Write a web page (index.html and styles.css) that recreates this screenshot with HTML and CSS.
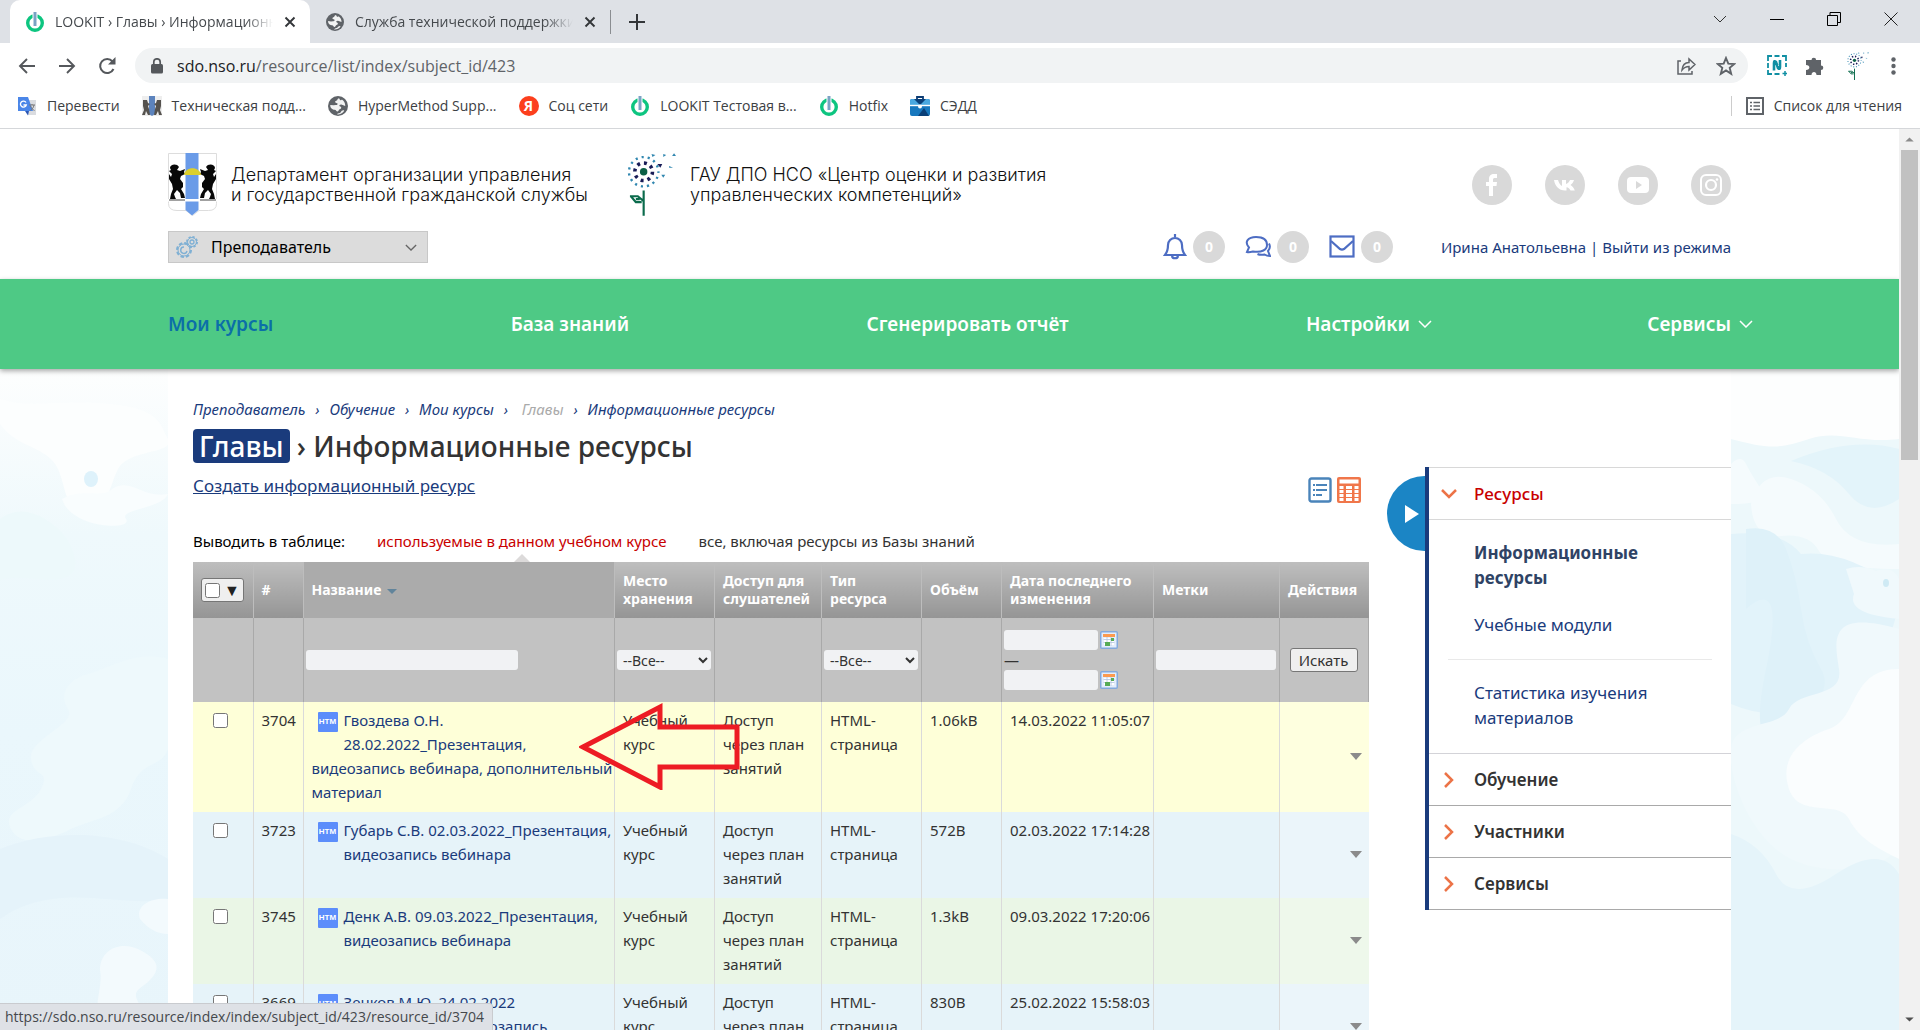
FILE: index.html
```html
<!DOCTYPE html>
<html lang="ru">
<head>
<meta charset="utf-8">
<title>LOOKIT › Главы › Информационные ресурсы</title>
<link rel="stylesheet" href="styles.css">
</head>
<body>
<svg class="defs" aria-hidden="true">
  <symbol id="power" viewBox="0 0 18 20"><circle cx="9" cy="11" r="7.3" fill="#fff" stroke="#0dc580" stroke-width="3.4"/><path d="M9 0v14" stroke="#fff" stroke-width="5"/><path d="M9 0v14" stroke="#7aa3c4" stroke-width="3"/></symbol>
  <symbol id="globe" viewBox="0 0 18 18"><circle cx="9" cy="9" r="9" fill="#5f6368"/><path d="M10 2c-2 .2-1 2-2.600 2.300C6 4.600 6 6 7.500 6.200c2 .3 1.200 2-.5 2L5 8.400 2 8c0 3 2 4.200 4 4.300 1.500 0 1.300 1.700 2.500 1.700 1 0 1-2 2.500-2.300 1.500-.4 1-2.200-.5-2.400-.8-.8.3-1.800 1.500-1.600L15.500 9c.3-2.500-1.500-5-3-5.800-.5.9-1.600 1-2.500-1.200zM8 16.500c1.500.3 5.500-.5 6.600-3.500-1.600-.4-2.600.6-3.100 1.600-.9 1.100-2.500.5-3.500 1.900z" fill="#fff" opacity=".92"/></symbol>
  <symbol id="x" viewBox="0 0 12 12"><path d="M1.500 1.500l9 9m0-9l-9 9" stroke="#333639" stroke-width="1.900"/></symbol>
  <symbol id="arms" viewBox="0 0 49 63">
    <path d="M.5.500h48v50q0 7-8 7h-9.500l-6.500 5-6.500-5H9q-8.500 0-8.500-7z" fill="#fff" stroke="#ddd"/>
    <path d="M17.500 0h13v57l-6.500 5.500-6.500-5.500z" fill="#6a9be8"/>
    <path d="M2 15c0-4 7-5 9-1l-2 3 3 1 5-2-1 3 1 2-4 2-1 3 3 4 0 4-2 2 3 5 1 4h-4l-1-5-3-3-3 4 1 3 1 2H2l1-5 2-5-1-5-3-5 0-5 2 3 1-3-3-3 2-1z" fill="#080808"/>
    <path d="M47 15c0-4-7-5-9-1l2 3-3 1-5-2 1 3-1 2 4 2 1 3-3 4 0 4 2 2-3 5-1 4h4l1-5 3-3 3 4-1 3-1 2h6l-1-5-2-5 1-5 3-5 0-5-2 3-1-3 3-3-2-1z" fill="#080808"/>
    <path d="M16 22c1-9 16-9 17 0z" fill="#dccf2c"/>
    <path d="M0 46h49v2.500H0z" fill="#fff"/><path d="M1 47h16m15 0h16" stroke="#444"/>
  </symbol>
  <symbol id="flower" viewBox="0 0 50 64">
    <circle cx="17" cy="19" r="3.800" fill="#0b5f46"/>
    <circle cx="17" cy="19" r="9" fill="none" stroke="#191c57" stroke-width="3.600" stroke-dasharray="3 4.070"/>
    <circle cx="17" cy="19" r="15" fill="none" stroke="#3187b0" stroke-width="2.400" stroke-dasharray="2.200 4.080" stroke-dashoffset="1"/>
    <path d="M31 11h5l-2 4z" fill="#191c57"/>
    <path d="M25 1l4 1-3 2zM37 1l3 1-3 2zM48 0l2 3h-4zM43 13l4 2h-4zM35 22h4l-2 3z" fill="#3187b0"/>
    <path d="M17 38v26M3 44h8l6 5M4 44l5 6h6M9 47h4" fill="none" stroke="#0b6b4c" stroke-width="2.200"/>
  </symbol>
  <symbol id="down" viewBox="0 0 14 8"><path d="M1 1l6 6 6-6" fill="none" stroke="currentColor" stroke-width="1.500"/></symbol>
  <symbol id="right" viewBox="0 0 16 16"><path d="M4 1l7 7-7 7" fill="none" stroke="#ec7347" stroke-width="2.500"/></symbol>
  <symbol id="cal" viewBox="0 0 18 18"><rect x=".75" y=".75" width="16.500" height="16.500" rx="1" fill="#e4eefc" stroke="#83a9dc" stroke-width="1.500"/><path d="M3 3h12v3H3z" fill="#fb9a50"/><path d="M4 7h10v7H4z" fill="#fff"/><path d="M3.500 8.500h11m-11 3h11M7 6v9m4-9v9" stroke="#b3c4df" stroke-width=".8"/><path d="M11 7h3v3h-3zM5 11h5v4H5z" fill="#58ab56"/></symbol>
</svg>

<header class="chrome">
  <div class="tabs">
    <div class="tab tab-on"><svg class="i18"><use href="#power"/></svg><span class="tab-title">LOOKIT › Главы › Информационные</span><button class="bare" aria-label="Закрыть"><svg class="i12"><use href="#x"/></svg></button></div>
    <div class="tab"><svg class="i18"><use href="#globe"/></svg><span class="tab-title">Служба технической поддержки</span><button class="bare" aria-label="Закрыть"><svg class="i12"><use href="#x"/></svg></button></div>
    <button class="bare newtab" aria-label="Новая вкладка"><svg class="i16" viewBox="0 0 16 16"><path d="M8 0v16M0 8h16" stroke="#333639" stroke-width="2"/></svg></button>
    <div class="wincontrols">
      <svg width="14" height="14" viewBox="0 0 14 14"><path d="M1 4l6 6 6-6" fill="none" stroke="#333"/></svg>
      <svg width="14" height="14" viewBox="0 0 14 14"><path d="M0 7.500h14" stroke="#000"/></svg>
      <svg width="14" height="14" viewBox="0 0 14 14"><path d="M.5 3.500h10v10H.5zM3 3.500V.5h10.500v10H11" fill="none" stroke="#000"/></svg>
      <svg width="14" height="14" viewBox="0 0 14 14"><path d="M.5.500l13 13m0-13l-13 13" stroke="#222"/></svg>
    </div>
  </div>
  <div class="toolbar">
    <div class="history">
      <button class="bare" aria-label="Назад"><svg class="i18" viewBox="0 0 18 18"><path d="M17 9H2m7-7L2 9l7 7" fill="none" stroke="#55585c" stroke-width="1.900"/></svg></button>
      <button class="bare" aria-label="Вперёд"><svg class="i18" viewBox="0 0 18 18"><path d="M1 9h15M9 2l7 7-7 7" fill="none" stroke="#55585c" stroke-width="1.900"/></svg></button>
      <button class="bare" aria-label="Обновить"><svg class="i18" viewBox="0 0 18 18"><path d="M15.500 12A7 7 0 1 1 14.500 4.500L16 6" fill="none" stroke="#55585c" stroke-width="2"/><path d="M17.500 0v7.500H10z" fill="#55585c"/></svg></button>
    </div>
    <div class="omnibox">
      <svg width="12" height="16" viewBox="0 0 12 16"><rect y="6" width="12" height="9.500" rx="1.500" fill="#55585c"/><path d="M2.800 7V4a3.200 3.200 0 0 1 6.400 0v3" fill="none" stroke="#55585c" stroke-width="1.700"/></svg>
      <span class="url"><b>sdo.nso.ru</b>/resource/list/index/subject_id/423</span>
      <svg class="i20" viewBox="0 0 20 20"><path d="M5 5H2v13h14v-3M6 14c.5-5 3.500-7.500 7-7.500V3l6 5.500-6 5.500v-3.500c-3 0-5 1-7 3.500z" fill="none" stroke="#5f6368" stroke-width="1.500"/></svg>
      <svg class="i20" viewBox="0 0 20 20"><path d="M10 2l2.300 5.600 6 .4-4.600 3.900 1.500 5.900L10 14.500l-5.200 3.300 1.500-5.900L1.700 8l6-.4z" fill="none" stroke="#5f6368" stroke-width="1.900"/></svg>
    </div>
    <svg width="20" height="21" viewBox="0 0 20 21"><path d="M1 6V1h4m2.500 0h5M15 1h4v5m0 2v4M1 8v5m0 2v4h4m2.500 0h5" fill="none" stroke="#108fa3" stroke-width="1.800"/><path d="M7 15.500V8q0-3 2-1l2 6q2 2 2-1V5" fill="none" stroke="#108fa3" stroke-width="2.600"/><path d="M18 16v5m-2.500-2.500h5" stroke="#108fa3" stroke-width="1.500"/></svg>
    <svg width="19" height="20" viewBox="0 0 19 20"><path d="M0 4h5.500a2.300 2.300 0 1 1 4.600 0H15v5.500a2.300 2.300 0 1 1 0 4.600V19h-4.500c0-4-5-4-5 0H0v-5c4.500 0 4.500-5 0-5z" fill="#5f6368"/></svg>
    <svg width="28" height="28"><use href="#flower"/></svg>
    <svg width="5" height="18" viewBox="0 0 5 18" fill="#5f6368"><circle cx="2.500" cy="2.500" r="2.200"/><circle cx="2.500" cy="9" r="2.200"/><circle cx="2.500" cy="15.500" r="2.200"/></svg>
  </div>
  <nav class="bookmarks">
    <a href="#"><svg class="i20" viewBox="0 0 20 20"><path d="M7 4h12v15H11z" fill="#dadce0"/><path d="M1 1h10l5 14H1z" fill="#4a86e8"/><path d="M12 15l-1 4.500L8 15z" fill="#2b57b5"/><path d="M9 6.500A3 3 0 1 0 9.300 9H6.500" fill="none" stroke="#fff" stroke-width="1.300"/><path d="M12 9h6m-3-1v1m2 0c-.5 3-2 4-3.500 5.500M13.500 10c.8 2 2 3.500 4 4.500" fill="none" stroke="#777"/></svg>Перевести</a>
    <a href="#"><svg class="i20" viewBox="0 0 20 20"><path d="M0 0h20v20H0z" fill="#eee"/><path d="M7 0h6v18l-3 2-3-2z" fill="#5c83bd"/><path d="M1 4h4l1 3 2 1-2 2 1 3 1 6H6l-2-4-1 4H0l2-5-1-4zM19 4h-4l-1 3-2 1 2 2-1 3-1 6h2l2-4 1 4h3l-2-5 1-4z" fill="#55524e"/></svg>Техническая подд...</a>
    <a href="#"><svg class="i20"><use href="#globe"/></svg>HyperMethod Supp...</a>
    <a href="#"><span class="ya">Я</span>Соц сети</a>
    <a href="#"><svg class="i20"><use href="#power"/></svg>LOOKIT Тестовая в...</a>
    <a href="#"><svg class="i20"><use href="#power"/></svg>Hotfix</a>
    <a href="#"><svg class="i20" viewBox="0 0 20 20"><path d="M7 4V1h6v3" fill="none" stroke="#0b3c74" stroke-width="1.800"/><rect y="3" width="20" height="17" rx="2" fill="#1878be"/><path d="M0 9V5q0-2 2-2h16q2 0 2 2v4z" fill="#4aa8e0"/><path d="M4 3h12l-6 6zM14 12l5 8H8z" fill="#0a3f78"/><path d="M0 9.500h20" stroke="#fff" stroke-width="1.400"/><circle cx="10" cy="10.500" r="2" fill="#fff"/></svg>СЭДД</a>
    <a href="#" class="reading"><svg class="i18" viewBox="0 0 18 18"><rect x="1" y="1" width="16" height="16" fill="none" stroke="#5f6368" stroke-width="2"/><path d="M4 5.500h2m1.500 0H14M4 9h2m1.500 0H14m-10 3.500h2m1.500 0H14" stroke="#5f6368" stroke-width="1.600"/></svg>Список для чтения</a>
  </nav>
</header>

<div class="viewport">
<div class="page">
  <header class="site-head">
    <div class="wrap head-top">
      <a href="#" class="logo"><svg width="49" height="63"><use href="#arms"/></svg><span>Департамент организации управления<br>и государственной гражданской службы</span></a>
      <a href="#" class="logo"><svg width="49" height="63"><use href="#flower"/></svg><span>ГАУ ДПО НСО «Центр оценки и развития<br>управленческих компетенций»</span></a>
      <div class="social">
        <a href="#" aria-label="Facebook"><svg viewBox="0 0 40 40"><path d="M17 31V21h-3v-4h3v-3c0-3.500 2-5 5-5h3v4h-2c-1.500 0-2 .5-2 2v2h4l-.5 4H21v10z" fill="#fff"/></svg></a>
        <a href="#" aria-label="VK"><svg viewBox="0 0 40 40"><path d="M9 15h4c1 3 2.500 5.500 4 6v-6h4v4c1.500-.3 3-2 4-4h4c-.6 2-2 4-3.500 5 1.800 1 3.500 3 4.300 5.500H25.500c-.8-1.700-2.300-3-4-3.200v3.200h-1.500C14 25.500 10 21 9 15z" fill="#fff"/></svg></a>
        <a href="#" aria-label="YouTube"><svg viewBox="0 0 40 40"><rect x="9" y="12" width="22" height="16" rx="4" fill="#fff"/><path d="M18 16l6 4-6 4z" fill="#d9d9d9"/></svg></a>
        <a href="#" aria-label="Instagram"><svg viewBox="0 0 40 40"><rect x="10" y="10" width="20" height="20" rx="5" fill="none" stroke="#fff" stroke-width="2"/><circle cx="20" cy="20" r="5" fill="none" stroke="#fff" stroke-width="2.200"/><circle cx="26" cy="14.500" r="1.300" fill="#fff"/></svg></a>
      </div>
    </div>
    <div class="wrap head-bottom">
      <label class="role"><svg class="gear" viewBox="0 0 24 24"><g fill="none" stroke="#7fb0d4"><circle cx="9" cy="15" r="7" stroke-width="2" stroke-dasharray="3.500 2"/><circle cx="9" cy="15" r="6" stroke-width="1"/><path d="M12 16a3.200 3.200 0 1 1-3-4" stroke-width="1.400"/><circle cx="17" cy="7" r="5" stroke-width="2" stroke-dasharray="2.200 1.700" fill="#dcdcdc"/><circle cx="17" cy="7" r="4.500"/><circle cx="17" cy="7" r="2" stroke-width="1.300"/></g></svg>
        <select aria-label="Роль"><option>Преподаватель</option></select><svg class="role-arrow"><use href="#down"/></svg></label>
      <div class="counters">
        <a href="#"><svg width="24" height="26" viewBox="0 0 24 26" fill="none" stroke="#4d6dc3" stroke-width="2.200"><path d="M12 0v3M2 21c2-2.500 3-5 3-10a7 7 0 0 1 14 0c0 5 1 7.500 3 10zM9 22c.5 3 5.500 3 6 0"/></svg><span>0</span></a>
        <a href="#"><svg width="26" height="26" viewBox="0 0 26 26" fill="none" stroke="#4d6dc3" stroke-width="2"><path d="M2 18l2-4.500C-1 8 3 3 11 3s11 3.500 11 8-5 8-14 6.500C6 18 4 18.500 2 18zM24 9.500c1.500 3 .5 6-1 7.500l2 5c-3 0-4-.5-5.500-1.500-3 .5-5 .5-7-.5"/></svg><span>0</span></a>
        <a href="#"><svg width="26" height="26" viewBox="0 0 26 26" fill="none" stroke="#4d6dc3" stroke-width="2.200"><rect x="1.500" y="2.500" width="23" height="20"/><path d="M2 7l9 8q2 1.200 4 0l9-8"/></svg><span>0</span></a>
      </div>
      <div class="user"><a href="#">Ирина Анатольевна</a> | <a href="#">Выйти из режима</a></div>
    </div>
  </header>

  <nav class="mainnav"><div class="wrap">
    <a href="#" class="on">Мои курсы</a><a href="#">База знаний</a><a href="#">Сгенерировать отчёт</a>
    <a href="#">Настройки<svg><use href="#down"/></svg></a><a href="#">Сервисы<svg><use href="#down"/></svg></a>
  </div></nav>

  <div class="body-grid">
    <svg class="sky" viewBox="0 0 168 661" preserveAspectRatio="none">
      <defs><linearGradient id="fade" x2="0" y2="1"><stop offset="0" stop-color="#fdfefe"/><stop offset=".25" stop-color="#eff9fc"/><stop offset=".55" stop-color="#eaf7fc"/><stop offset="1" stop-color="#e8f5fb"/></linearGradient></defs>
      <path d="M0 0h168v661H0z" fill="url(#fade)"/>
      <path d="M0 30c30 10 60 0 110 5s50 20 58 35-40 10-50 30-5 30-30 36-20-13-30-36-40-20-58-45z" fill="#fcfefe"/>
      <path d="M62 130c20-12 40 0 50-10 20-12 30 10 56 5-6 15-50 15-42 25 8 12-55 10-64-20z" fill="#f9fdfe"/>
      <path d="M0 150q20-15 45 0t30 40-40 20-35 10z" fill="#edf9fb"/>
      <path d="M168 290c-30-10-60 10-80 15s-30 20-20 35-40 30-37 50 20 10 10 30-40 20-30 40 40 10 60 0 50-10 60-40 30-20 37-40z" fill="#eef9fc"/>
      <path d="M0 480c50-20 120-20 168 10v40c-50 10-110-20-168 20z" fill="#e5f3fa"/>
      <path d="M104 661c-15-20 0-40-4-60 0-20 20-30 40-20s20 20 10 30-20 10-10 25-6 20-10 25zM140 550c-5-12 10-22 28-20v35c-10 0-20-5-28-15z" fill="#f3fafd"/>
      <ellipse cx="91" cy="110" rx="7" ry="8" fill="#def2fb"/>
    </svg>

    <main class="content">
      <section class="resources">
        <nav class="crumbs"><a href="#">Преподаватель</a><i>›</i><a href="#">Обучение</a><i>›</i><a href="#">Мои курсы</a><i>›</i><a href="#" class="dim">Главы</a><i>›</i><a href="#">Информационные ресурсы</a></nav>
        <h1><a href="#">Главы</a> › Информационные ресурсы</h1>
        <div class="create"><a href="#">Создать информационный ресурс</a>
          <span class="views">
            <svg width="24" height="26" viewBox="0 0 24 26"><rect x="1.500" y="1.500" width="21" height="23" rx="2" fill="#fff" stroke="#4a84ba" stroke-width="2.400"/><path d="M5 8h2m1 0h11M5 13h2m1 0h11M5 18h2m1 0h6" stroke="#4a84ba" stroke-width="1.800"/></svg>
            <svg width="24" height="26" viewBox="0 0 24 26"><rect width="24" height="26" rx="2" fill="#f0764a"/><path d="M2.500 2.500h19v4h-19zM2.500 9h4v3h-4zm0 4h4v3h-4zm0 4h4v3h-4zm0 4h4v3h-4zM9 9h6v3H9zm0 4h6v3H9zm0 4h6v3H9zm0 4h6v3H9zM17.500 9h4v3h-4zm0 4h4v3h-4zm0 4h4v3h-4zm0 4h4v3h-4z" fill="#fff"/></svg>
          </span>
        </div>
        <div class="scope"><span>Выводить в таблице:</span><a href="#" class="on">используемые в данном учебном курсе</a><a href="#">все, включая ресурсы из Базы знаний</a></div>

        <table>
          <colgroup><col class="c-check"><col class="c-id"><col><col class="c-place"><col class="c-access"><col class="c-type"><col class="c-size"><col class="c-date"><col class="c-tags"><col class="c-act"></colgroup>
          <thead>
            <tr><th><span class="allbox"><input type="checkbox" aria-label="Выбрать все">▼</span></th><th>#</th><th class="sorted">Название <span class="sort"></span></th><th>Место хранения</th><th>Доступ для слушателей</th><th>Тип<br>ресурса</th><th>Объём</th><th>Дата последнего изменения</th><th>Метки</th><th>Действия</th></tr>
            <tr class="filters"><td></td><td></td><td><input type="text" class="f-name" aria-label="Название"></td><td><select aria-label="Место хранения"><option>--Все--</option></select></td><td></td><td><select aria-label="Тип ресурса"><option>--Все--</option></select></td><td></td>
              <td><div class="dates"><span><input type="text" aria-label="Дата с"><svg class="i18"><use href="#cal"/></svg></span><span class="dash">—</span><span><input type="text" aria-label="Дата по"><svg class="i18"><use href="#cal"/></svg></span></div></td>
              <td><input type="text" aria-label="Метки"></td><td class="go"><button>Искать</button></td></tr>
          </thead>
          <tbody>
            <tr class="hover"><td><input type="checkbox" aria-label="3704"></td><td>3704</td><td class="name"><span class="htm">HTM</span><a href="#">Гвоздева О.Н.<br>28.02.2022_Презентация,<br>видеозапись вебинара, дополнительный<br>материал</a></td><td>Учебный курс</td><td>Доступ<br>через план занятий</td><td>HTML-страница</td><td>1.06kB</td><td>14.03.2022 11:05:07</td><td></td><td class="act"><span class="more"></span></td></tr>
            <tr><td><input type="checkbox" aria-label="3723"></td><td>3723</td><td class="name"><span class="htm">HTM</span><a href="#">Губарь С.В. 02.03.2022_Презентация,<br>видеозапись вебинара</a></td><td>Учебный курс</td><td>Доступ<br>через план занятий</td><td>HTML-страница</td><td>572B</td><td>02.03.2022 17:14:28</td><td></td><td class="act"><span class="more"></span></td></tr>
            <tr class="alt"><td><input type="checkbox" aria-label="3745"></td><td>3745</td><td class="name"><span class="htm">HTM</span><a href="#">Денк А.В. 09.03.2022_Презентация,<br>видеозапись вебинара</a></td><td>Учебный курс</td><td>Доступ<br>через план занятий</td><td>HTML-страница</td><td>1.3kB</td><td>09.03.2022 17:20:06</td><td></td><td class="act"><span class="more"></span></td></tr>
            <tr><td><input type="checkbox" aria-label="3669"></td><td>3669</td><td class="name"><span class="htm">HTM</span><a href="#">Зенков М.Ю. 24.02.2022<br>_Презентация, видеозапись</a></td><td>Учебный курс</td><td>Доступ<br>через план занятий</td><td>HTML-страница</td><td>830B</td><td>25.02.2022 15:58:03</td><td></td><td class="act"><span class="more"></span></td></tr>
          </tbody>
        </table>
        <svg class="pointer" viewBox="0 0 164 90"><path d="M4 47l77-40v20h77v40H81v20z" fill="none" stroke="#ed1c24" stroke-width="5"/></svg>
      </section>

      <aside class="side">
        <button class="toggle" aria-label="Свернуть меню"><svg viewBox="0 0 14 18"><path d="M0 0l14 9-14 9z" fill="#fff"/></svg></button>
        <a href="#" class="sec open"><svg width="16" height="10" viewBox="0 0 16 10"><path d="M1 1l7 7 7-7" fill="none" stroke="#ec7347" stroke-width="2.500"/></svg>Ресурсы</a>
        <div class="items"><a href="#" class="cur">Информационные ресурсы</a><a href="#">Учебные модули</a><hr><a href="#">Статистика изучения материалов</a></div>
        <a href="#" class="sec"><svg width="16" height="16"><use href="#right"/></svg>Обучение</a>
        <a href="#" class="sec"><svg width="16" height="16"><use href="#right"/></svg>Участники</a>
        <a href="#" class="sec"><svg width="16" height="16"><use href="#right"/></svg>Сервисы</a>
      </aside>
    </main>

    <svg class="sky" viewBox="0 0 168 661" preserveAspectRatio="none">
      <path d="M0 0h168v661H0z" fill="#edf8fb"/>
      <path d="M0 0h168v70c-40 5-60-10-90 0s-40 10-78 0z" fill="#fdfefe"/>
      <path d="M60 92q60-25 108-12v50q-30 20-50-5t-58-33z" fill="#e3f4fa"/>
      <path d="M0 95q10-10 15 0t15 25-30 15zM20 135q10-35 40-25t45 40 63 25v25q-70 0-80-18t-38-15-30-32z" fill="#f5fbfd"/>
      <path d="M0 165q50-5 70 20 45-5 98 35 0 60-55 100t-113 15z" fill="#e2f3fa"/>
      <path d="M15 160q30-5 40 20t15 60 20 60-30 60-25-60-20-60z" fill="#def1f9"/>
      <path d="M115 200q15-5 30 2 18-5 23 8v40q-53-5-45-25z" fill="#f0f9fc"/>
      <path d="M168 260c-70-20-65 10-60 40s-40 20-50 40-55 10-58 40 20 90 60 110 108 10 108-20z" fill="#f0f9fc"/>
      <path d="M168 300c-50 0-40 50-70 60s-50 30-40 60 50 10 60 30 30 30 50 40z" fill="#fafdfe"/>
      <path d="M0 465q30 10 45 40t60 0 63 0v156H0z" fill="#e5f4fa"/>
      <ellipse cx="155" cy="214" rx="3" ry="4" fill="#cfeaf4"/>
    </svg>
  </div>
  <div class="status">https://sdo.nso.ru/resource/index/index/subject_id/423/resource_id/3704</div>
</div>
<div class="scrollbar"><svg viewBox="0 0 20 20"><path d="M6 12l4-4 4 4z" fill="#8b8b8b"/></svg><span class="thumb"></span><svg class="last" viewBox="0 0 20 20"><path d="M6 8l4 4 4-4z" fill="#505050"/></svg></div>
</div>
</body>
</html>
```
FILE: styles.css
```css
* { box-sizing: border-box; }
body { margin: 0; height: 100vh; display: flex; flex-direction: column; overflow: hidden; font-family: "Noto Sans", sans-serif; font-size: 15px; color: #333; background: #fff; }
a { color: #1a3b7c; text-decoration: none; }
svg { display: block; flex: none; }
button, input, select { font: inherit; color: inherit; }
.defs { position: absolute; width: 0; height: 0; }
.bare { border: 0; padding: 0; background: none; }
.i12 { width: 12px; height: 12px; }
.i16 { width: 16px; height: 16px; }
.i18 { width: 18px; height: 20px; }
.i20 { width: 20px; height: 20px; }

/* browser frame */
.chrome { flex: none; font-family: "Open Sans", sans-serif; font-size: 14px; border-bottom: 1px solid #d5d7da; }
.tabs { display: flex; align-items: center; height: 43px; padding-left: 10px; background: #dee1e6; }
.tab { display: flex; align-items: center; gap: 11px; width: 300px; height: 43px; padding: 0 14px 0 16px; color: #45494d; }
.tab-on { background: #fff; border-radius: 10px 10px 0 0; }
.tab-title { flex: 1; overflow: hidden; white-space: nowrap; -webkit-mask-image: linear-gradient(to left, transparent, #000 28px); mask-image: linear-gradient(to left, transparent, #000 28px); }
.newtab { padding-left: 18px; height: 24px; border-left: 1px solid #8a8d91; }
.wincontrols { display: flex; gap: 43px; margin-left: auto; padding: 0 22px 6px 0; }
.toolbar { display: flex; align-items: center; gap: 19px; height: 45px; padding: 0 24px 0 18px; }
.history { display: flex; gap: 22px; }
.omnibox { display: flex; flex: 1; align-items: center; gap: 20px; height: 35px; padding: 0 12px 0 16px; border-radius: 18px; background: #f1f3f4; }
.omnibox .url { flex: 1; margin-left: -6px; font-size: 16px; color: #5f6368; }
.url b { font-weight: 400; color: #202124; }
.bookmarks { display: flex; align-items: center; gap: 22px; height: 40px; padding: 0 18px 5px 17px; }
.bookmarks a { display: flex; align-items: center; gap: 10px; color: #3c4043; }
.ya { width: 20px; height: 20px; border-radius: 50%; background: #fc3f1d; color: #fff; font-weight: 700; line-height: 20px; text-align: center; }
.reading { margin-left: auto; padding-left: 14px; border-left: 1px solid #ccc; }

.viewport { display: flex; flex: 1; min-height: 0; }
.page { position: relative; flex: 1; min-width: 0; overflow: hidden; display: flex; flex-direction: column; }
.scrollbar { display: flex; flex-direction: column; width: 21px; background: #f1f1f1; }
.scrollbar svg { width: 21px; height: 21px; }
.thumb { height: 310px; margin: 0 2px; background: #c1c1c1; }
.last { margin-top: auto; }

/* site header */
.wrap { width: 100%; max-width: 1563px; margin: 0 auto; display: flex; align-items: center; }
.site-head { flex: none; height: 150px; }
.head-top { height: 102px; padding-top: 9px; }
.logo { display: flex; align-items: center; gap: 14px; width: 459px; color: #111; font-family: Inter, sans-serif; font-weight: 300; font-size: 18px; line-height: 20px; white-space: nowrap; }
.social { display: flex; gap: 33px; margin-left: auto; }
.social a { width: 40px; height: 40px; border-radius: 50%; background: #d9d9d9; }
.head-bottom { height: 32px; }
.role { display: grid; grid-template-columns: 42px 1fr 24px; align-items: center; width: 260px; height: 32px; border: 1px solid #c8c8c8; background: #dcdcdc; }
.gear { width: 24px; height: 24px; margin-left: 6px; }
.role select { appearance: none; border: 0; background: none; padding: 0; font-size: 16px; color: #000; }
.role-arrow { width: 12px; height: 7px; margin-left: 2px; color: #666; }
.counters { display: flex; gap: 20px; margin-left: auto; margin-right: 48px; }
.counters a { display: flex; align-items: center; gap: 6px; }
.counters span { width: 32px; height: 32px; border-radius: 50%; background: #d9d9d9; color: #fff; font-size: 14px; font-weight: 700; line-height: 32px; text-align: center; }
.user { color: #1a3b7c; }

.mainnav { flex: none; position: relative; height: 90px; background: #4ec985; box-shadow: 0 2px 5px rgba(0, 0, 0, .35); display: flex; }
.mainnav .wrap { justify-content: space-between; }
.mainnav a { position: relative; color: #fff; font-size: 19px; font-weight: 600; }
.mainnav .on { color: #0b6fa8; }
.mainnav svg { position: absolute; left: calc(100% + 8px); top: 9px; width: 14px; height: 8px; }

/* content */
.body-grid { display: grid; flex: 1; min-height: 0; grid-template-columns: minmax(0, 1fr) minmax(0, 1563px) minmax(0, 1fr); }
.sky { width: 100%; height: 100%; min-height: 0; }
.content { display: flex; gap: 56px; min-height: 0; padding-left: 25px; }
.resources { position: relative; flex: 1; min-width: 0; padding-top: 28px; }
.crumbs { display: flex; height: 24px; font-size: 15px; font-style: italic; line-height: 24px; }
.crumbs i { width: 24px; text-align: center; color: #1a3b7c; }
.crumbs .dim { padding-left: 4px; color: #aaa; }
h1 { margin: 8px 0 0; font-size: 28px; font-weight: 500; line-height: 34px; color: #333; white-space: nowrap; }
h1 a { display: inline-block; padding: 0 6px; border-radius: 4px; background: #1a3b7c; color: #fff; }
.create { display: flex; justify-content: space-between; align-items: flex-start; padding: 10px 8px 0 0; height: 60px; font-size: 17px; line-height: 26px; }
.create > a { text-decoration: underline; }
.views { display: flex; gap: 5px; padding-top: 4px; }
.scope { display: flex; gap: 32px; height: 39px; font-size: 15px; line-height: 36px; color: #000; }
.scope a { color: #333; }
.scope .on { position: relative; color: #c80000; }
.scope .on::after { content: ""; position: absolute; left: 50%; bottom: 0; margin-left: -8px; border: 8px solid transparent; border-top: 0; border-bottom-color: #dcdada; }

table { width: 100%; table-layout: fixed; border-collapse: collapse; line-height: 24px; font-size: 15px; }
.c-check { width: 60px; }
.c-id { width: 50px; }
.c-place, .c-type { width: 100px; }
.c-access { width: 107px; }
.c-size { width: 80px; }
.c-date { width: 152px; }
.c-tags { width: 126px; }
.c-act { width: 89px; }
th { height: 56px; padding: 0 0 0 8px; border-right: 1px solid #bdbdbd; background: linear-gradient(#bebebe, #959595); color: #fff; font-size: 14px; line-height: 18px; font-weight: 700; text-align: left; }
th.sorted { background: #ababab; }
th:last-child, td:last-child { border-right: 0; }
.allbox { display: inline-flex; align-items: center; gap: 2px; height: 24px; padding: 0 3px; border: 1px solid #767676; border-radius: 3px; background: #efefef; color: #222; font-size: 16px; }
.allbox input { margin: 0 2px 0 0; width: 15px; height: 15px; }
.sort { display: inline-block; margin-left: 2px; vertical-align: middle; border: 5px solid transparent; border-bottom: 0; border-top-color: #61849b; }
.filters td { height: 84px; padding: 0 3px 0 2px; border-right: 1px solid #a9a9a9; background: #c2c2c2; vertical-align: middle; }
.filters input, .filters select { display: block; width: 100%; height: 20px; border: 0; border-radius: 3px; background: #f1f2f4; padding: 0 0 0 2px; font-size: 14px; line-height: 20px; }
.filters .f-name { width: 212px; }
.dates { display: grid; line-height: 20px; }
.dates > span { display: flex; gap: 2px; }
.dates input { width: 94px; }
.filters .go { text-align: center; }
.go button { width: 68px; height: 24px; padding: 0; border: 1px solid #767676; border-radius: 3px; background: #efefef; line-height: 20px; }
tbody td { padding: 6px 2px 8px 8px; border-right: 1px solid #dadada; background: #e6f3f9; vertical-align: top; }
tbody td:first-child { padding: 11px 0 0; text-align: center; line-height: 15px; }
tbody input { width: 15px; height: 15px; margin: 0 0 0 -4px; }
.name { white-space: nowrap; }
.hover td { background: #feffd8; }
.alt td { background: #eaf6e6; }
tbody .act { vertical-align: middle; background-image: linear-gradient(#ffffff30, #ffffff30); }
.more { display: block; width: 12px; margin: 0 5px 0 auto; border: 6px solid transparent; border-bottom: 0; border-top: 7px solid #8b8b8b; }
.htm { float: left; width: 20px; height: 20px; margin: 4px 6px 8px; border-radius: 1px; background: #5c8dfb; color: #fff; font: 700 8px/20px "Liberation Sans", sans-serif; text-align: center; }
.pointer { position: absolute; left: 386px; top: 331px; width: 164px; height: 90px; }

.side { position: relative; width: 306px; height: 443px; margin-top: 98px; border-left: 4px solid #1a3b7c; font-size: 17px; }
.toggle { position: absolute; right: calc(100% + 4px); top: 9px; width: 38px; height: 75px; padding: 0 0 0 18px; border: 0; border-radius: 38px 0 0 38px; background: #1b85c5; }
.toggle svg { width: 14px; height: 18px; }
.sec { display: flex; align-items: center; gap: 17px; height: 52px; padding-left: 12px; border-bottom: 1px solid #a9a9a9; color: #333; font-weight: 600; }
.open { border: solid #d8d8d8; border-width: 1px 0; height: 53px; color: #c80000; font-weight: 500; }
.items { padding: 20px 19px 23px; border-bottom: 1px solid #d3d3d8; }
.items a { display: block; width: 220px; padding: 0 0 22px 26px; line-height: 25px; }
.items .cur { color: #2f4365; font-weight: 700; }
.items hr { margin: 0 0 20px; border: 0; border-top: 1px solid #e9e9e9; }
.items a:last-child { padding-bottom: 0; }

.status { position: absolute; left: 0; bottom: 0; height: 27px; padding: 0 8px 0 5px; border: 1px solid #c9cbcf; border-width: 1px 1px 0 0; border-radius: 0 4px 0 0; background: #dee1e6; color: #45484c; font-family: "Open Sans", sans-serif; font-size: 14px; line-height: 26px; }
```
